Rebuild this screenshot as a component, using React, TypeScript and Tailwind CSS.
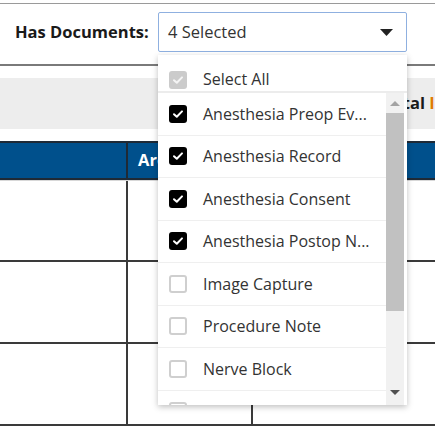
import React from "react";

const font = { fontFamily: '"Open Sans", "Noto Sans", "Liberation Sans", sans-serif' };

function Check({ color = "#fff" }: { color?: string }) {
  return (
    <svg width="12" height="10" viewBox="0 0 12 10">
      <path d="M2 5.2 L4.8 7.8 L10 2.4" fill="none" stroke={color} strokeWidth="2" strokeLinecap="round" strokeLinejoin="round" />
    </svg>
  );
}

function Box({ checked }: { checked: boolean }) {
  if (checked)
    return (
      <div className="w-[18px] h-[18px] rounded-[3px] bg-black flex items-center justify-center shrink-0">
        <Check />
      </div>
    );
  return <div className="w-[18px] h-[18px] rounded-[3px] border-2 border-[#cfcfcf] bg-white shrink-0" />;
}

const items: [string, boolean][] = [
  ["Anesthesia Preop Ev...", true],
  ["Anesthesia Record", true],
  ["Anesthesia Consent", true],
  ["Anesthesia Postop N...", true],
  ["Image Capture", false],
  ["Procedure Note", false],
  ["Nerve Block", false],
  ["", false],
];

export default function App() {
  return (
    <div className="relative w-[435px] h-[429px] overflow-hidden bg-white text-[#222]" style={font}>
      <div className="h-[3px]" />
      <div className="border-t border-[#9a9a9a]" />
      <div className="h-[60px] flex items-start pt-[8px]">
        <div className="w-[158px] pl-[15px] pt-[9px] text-[16.5px] font-bold text-[#1a1a1a] leading-[21px] whitespace-nowrap">Has Documents:</div>
        <div className="w-[249px] h-[40px] border border-[#8fb0e0] rounded-[2px] flex items-center pl-[9px] pr-[13px] justify-between">
          <span className="text-[16.5px] text-[#333]">4 Selected</span>
          <svg width="13" height="7" viewBox="0 0 13 7">
            <path d="M0 0 H13 L6.5 7 Z" fill="#222" />
          </svg>
        </div>
      </div>
      <div className="border-t-2 border-[#7a7a7a]" />
      <div className="h-[12px]" />
      <div className="h-[51px] bg-[#ededed] flex items-center pl-[383px] whitespace-nowrap overflow-hidden text-[16.5px] font-bold">
        <span className="text-[#1a1a1a]">Total&nbsp;</span>
        <span className="text-[#e07b00]">I</span>
      </div>
      <div className="h-[12px]" />
      <div className="border-t-2 border-[#1f2a36]" />
      <div className="h-[37px] bg-[#00508c] flex border-b-2 border-[#1f2a36]">
        <div className="w-[128px] border-r-2 border-[#1f2a36]" />
        <div className="w-[125px] pl-[10px] flex items-center text-white font-bold text-[16.5px]">Area</div>
        <div className="flex-1" />
      </div>
      <div className="border-t border-[#d8d8d8]" />
      {[81, 82, 82].map((h, i) => (
        <div key={i} className="flex border-b-2 border-[#3a3a3a]" style={{ height: h }}>
          <div className="w-[128px] border-r-2 border-[#3a3a3a]" />
          <div className="w-[125px] border-r-2 border-[#3a3a3a]" />
          <div className="flex-1" />
        </div>
      ))}

      <div className="absolute left-[158px] top-[55px] w-[249px] h-[350px] bg-white shadow-[0_2px_6px_rgba(0,0,0,0.25)] flex flex-col">
        <div className="h-[38px] border-b-2 border-[#ececec] flex items-start pt-[16px] pl-[11px] shrink-0">
          <div className="w-[18px] h-[18px] rounded-[3px] bg-[#cbcbcb] flex items-center justify-center">
            <Check color="#f4f4f4" />
          </div>
          <span className="ml-[16px] text-[16px] text-[#333] leading-[18px] -mt-[1px]">Select All</span>
        </div>
        <div className="flex flex-1 overflow-hidden">
          <div className="flex-1 overflow-hidden">
            {items.map(([t, c], i) => (
              <div key={i} className="h-[42.5px] border-b border-[#efefef] flex items-center pl-[11px]">
                <Box checked={c} />
                <span className="ml-[16px] text-[16px] text-[#333] whitespace-nowrap">{t}</span>
              </div>
            ))}
          </div>
          <div className="w-[18px] mr-[3px] bg-[#f1f1f1] flex flex-col items-center">
            <div className="h-[20px] flex items-center justify-center pt-[1px]">
              <svg width="10" height="5" viewBox="0 0 10 5"><path d="M5 0 L10 5 H0 Z" fill="#a3a3a3" /></svg>
            </div>
            <div className="w-full h-[198px] bg-[#c1c1c1]" />
            <div className="flex-1" />
            <div className="h-[22px] flex items-center justify-center pb-[4px]">
              <svg width="10" height="5" viewBox="0 0 10 5"><path d="M0 0 H10 L5 5 Z" fill="#505050" /></svg>
            </div>
          </div>
        </div>
      </div>
    </div>
  );
}
